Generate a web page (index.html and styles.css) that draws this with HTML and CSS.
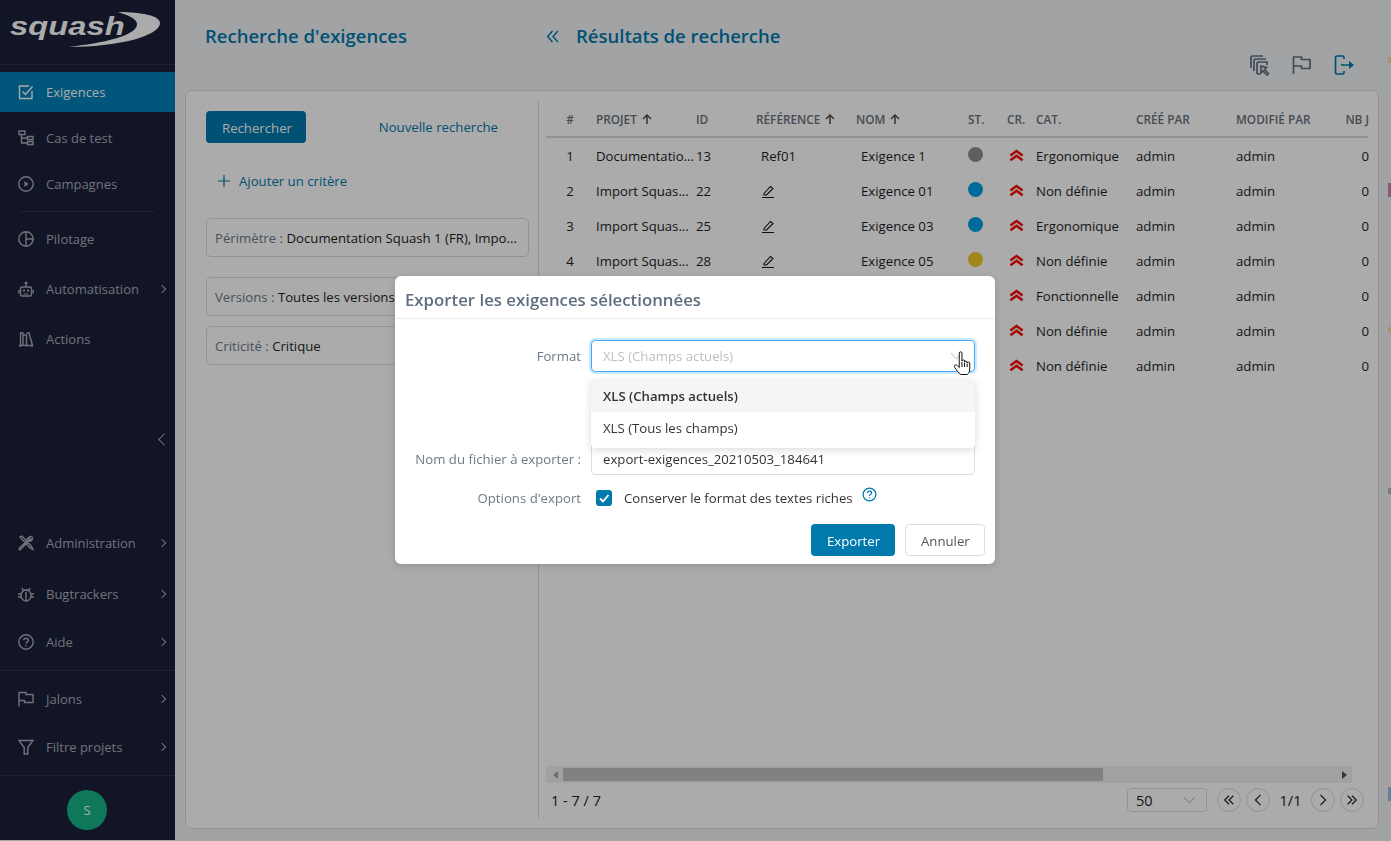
FILE: index.html
```html
<!DOCTYPE html>
<html lang="fr">

<head>
    <meta charset="UTF-8">
    <meta name="viewport" content="width=device-width, initial-scale=1.0">
    <title>Recherche d'exigences - Squash</title>
    <link rel="stylesheet" href="styles.css">
</head>

<body>

    <div class="app">
        <!-- Menu principal -->
        <nav class="sidebar">
            <div class="logo">
                <span class="logo-text">squash</span>
                <svg class="logo-swoosh" viewBox="0 0 92 36" width="92" height="36">
                    <path d="M50 0C75 0 92 4 92 11C92 24 50 35 0 35C35 31 69 24 69 12C69 7 60 3 50 0Z" />
                </svg>
            </div>

            <a class="nav-item active">
                <svg class="nav-icon" viewBox="0 0 16 16"><path d="M14 7v7.500H1.500V2H11" /><path d="M4.500 7.500l3 3L14.500 2.500" /></svg>
                <span>Exigences</span>
            </a>
            <a class="nav-item">
                <svg class="nav-icon" viewBox="0 0 16 16"><path d="M1 1h6v3.500H1zM9.500 6.500h5.500v3H9.500zM9.500 11.500h5.500v3H9.500zM3.500 4.500V13H9.500M3.500 8H9.500" /></svg>
                <span>Cas de test</span>
            </a>
            <a class="nav-item">
                <svg class="nav-icon" viewBox="0 0 16 16"><circle cx="8" cy="8" r="7.200" /><path class="solid" d="M6.500 5l4 3-4 3z" /></svg>
                <span>Campagnes</span>
            </a>
            <div class="nav-sep"></div>

            <div class="nav-group">
                <a class="nav-item">
                    <svg class="nav-icon" viewBox="0 0 16 16"><circle cx="8" cy="8" r="7.200" /><path d="M8 .8v14.400M8 8h7.200" /></svg>
                    <span>Pilotage</span>
                </a>
                <a class="nav-item">
                    <svg class="nav-icon" viewBox="0 0 16 16"><rect x="2.500" y="6" width="11" height="9" rx="1.500" /><path d="M8 6V3M.8 9v3.500M15.200 9v3.500" /><circle cx="8" cy="2" r=".8" /><path class="solid" d="M5 8.500h2v2H5zM9 8.500h2v2H9zM5.500 12.500h5v1h-5z" /></svg>
                    <span>Automatisation</span>
                    <i class="nav-arrow"></i>
                </a>
                <a class="nav-item">
                    <svg class="nav-icon" viewBox="0 0 16 16"><path d="M1 14.500h14M2.500 14.500V2H5v12.500M5 4h3.500v10.500M8.500 2h2.500l3.500 12.500M2 16v-1.500M14 16v-1.500" /></svg>
                    <span>Actions</span>
                </a>
            </div>

            <div class="collapse-row"><i class="collapse-arrow"></i></div>

            <a class="nav-item admin">
                <svg class="nav-icon" viewBox="0 0 16 16"><path d="M2 2l2-1 9.500 10.500 1.500 3-3-1.500zM13 1.500l-2.500 2.500 1.500 1.500 2.500-2.500c0 2-2 4-4 3L3.500 13.500 2 15 1 14l1-1.500L9 6c-.5-2 2-4.500 4-4.500z" /></svg>
                <span>Administration</span>
                <i class="nav-arrow"></i>
            </a>
            <a class="nav-item bug">
                <svg class="nav-icon" viewBox="0 0 16 16"><ellipse cx="8" cy="9.500" rx="5" ry="5.500" /><path d="M8 6v8M5 4.500L4 2M11 4.500L12 2M3 8H0M13 8h3M3 11H0M13 11h3" /><path class="solid" d="M5 3.500h6V5H5z" /></svg>
                <span>Bugtrackers</span>
                <i class="nav-arrow"></i>
            </a>
            <a class="nav-item aide">
                <svg class="nav-icon" viewBox="0 0 16 16"><circle cx="8" cy="8" r="7.200" /><path d="M5.800 6.200C5.800 3.500 10.300 3.500 10.300 6.200 10.300 7.900 8 7.800 8 9.800M8 11v1.200" /></svg>
                <span>Aide</span>
                <i class="nav-arrow"></i>
            </a>
            <div class="nav-line"></div>
            <a class="nav-item jalons">
                <svg class="nav-icon" viewBox="0 0 16 16"><path d="M1 15.500V1.500h7v2h7v8H6.500v-2H1" /></svg>
                <span>Jalons</span>
                <i class="nav-arrow"></i>
            </a>
            <a class="nav-item filtre">
                <svg class="nav-icon" viewBox="0 0 16 16"><path d="M1 1.500h14L9.800 8.500v6.500H6.200V8.500z" /></svg>
                <span>Filtre projets</span>
                <i class="nav-arrow"></i>
            </a>
            <div class="nav-line"></div>
            <div class="avatar">S</div>
        </nav>

        <!-- Contenu -->
        <main class="content">
            <div class="page-head">
                <h1 class="title-left">Recherche d'exigences</h1>
                <div class="head-right">
                    <div class="title-row">
                        <svg class="fold-icon" viewBox="0 0 12 12"><path d="M6 1L1.500 6 6 11M11 1L6.500 6 11 11" /></svg>
                        <h1>Résultats de recherche</h1>
                    </div>
                    <div class="head-tools">
                        <svg class="tool-icon" viewBox="0 0 22 22"><path d="M2 14V3.500C2 2.500 2.500 2 3.500 2H14M5 17V6.500C5 5.500 5.500 5 6.500 5H17M8 20V9.500C8 8.500 8.500 8 9.500 8H18v3M8 20h3M12 12v7l2-2 4 4 1.500-1.500-4-4 2-2z" /></svg>
                        <svg class="tool-icon" viewBox="0 0 22 22"><path d="M2.500 20V3h8v2.500H19v9h-8.500V12H2.500" /></svg>
                        <svg class="tool-icon blue" viewBox="0 0 22 22"><path d="M11 5V3.500C11 2.500 10.500 2 9.500 2H4C3 2 2.500 2.500 2.500 3.500v15c0 1 .5 1.500 1.500 1.500h5.500c1 0 1.500-.5 1.500-1.500V17M8 11h11" /><path class="solid-tool" d="M16 7l5 4-5 4z" /></svg>
                    </div>
                </div>
            </div>

            <section class="card">
                <!-- Critères -->
                <div class="criteria">
                    <div class="criteria-actions">
                        <button class="btn btn-primary">Rechercher</button>
                        <a class="link-new">Nouvelle recherche</a>
                    </div>
                    <a class="add-criteria">
                        <svg viewBox="0 0 12 12" width="12" height="12"><path d="M6 0v12M0 6h12" /></svg>
                        <span>Ajouter un critère</span>
                    </a>
                    <div class="criteria-tag scope"><span class="tag-label">Périmètre :</span> Documentation Squash 1 (FR), Impo...</div>
                    <div class="criteria-tag"><span class="tag-label">Versions :</span> Toutes les versions</div>
                    <div class="criteria-tag"><span class="tag-label">Criticité :</span> Critique</div>
                </div>

                <!-- Résultats -->
                <div class="results">
                    <div class="grid-row grid-head">
                        <div class="center">#</div>
                        <div>PROJET <svg class="sort" viewBox="0 0 10 10"><path d="M5 10V1M1 5l4-4 4 4" /></svg></div>
                        <div>ID</div>
                        <div>RÉFÉRENCE <svg class="sort" viewBox="0 0 10 10"><path d="M5 10V1M1 5l4-4 4 4" /></svg></div>
                        <div>NOM <svg class="sort" viewBox="0 0 10 10"><path d="M5 10V1M1 5l4-4 4 4" /></svg></div>
                        <div class="st">ST.</div>
                        <div>CR.</div>
                        <div>CAT.</div>
                        <div>CRÉÉ PAR</div>
                        <div>MODIFIÉ PAR</div>
                        <div class="right clip">NB J</div>
                    </div>
                    <div id="rows"></div>
                    <div class="grid-spacer"></div>

                    <div class="scrollbar">
                        <i class="scroll-left"></i>
                        <div class="scroll-track"><div class="scroll-thumb"></div></div>
                        <i class="scroll-right"></i>
                    </div>

                    <div class="pager">
                        <span class="pager-count">1 - 7 / 7</span>
                        <div class="pager-size"><span>50</span><svg viewBox="0 0 14 8" width="13" height="8"><path d="M1 1l6 6 6-6" /></svg></div>
                        <button class="page-btn"><svg viewBox="0 0 14 12"><path d="M7 1L2 6l5 5M12 1L7 6l5 5" /></svg></button>
                        <button class="page-btn"><svg viewBox="0 0 14 12"><path d="M10 0L4 6l6 6" /></svg></button>
                        <span class="page-num">1/1</span>
                        <button class="page-btn"><svg viewBox="0 0 14 12"><path d="M4 0l6 6-6 6" /></svg></button>
                        <button class="page-btn"><svg viewBox="0 0 14 12"><path d="M2 1l5 5-5 5M7 1l5 5-5 5" /></svg></button>
                    </div>
                </div>
            </section>
        </main>

        <!-- Bord de la colonne suivante, coupé par la fenêtre -->
        <div class="right-rail">
            <i class="rail-mark m1"></i>
            <i class="rail-mark m2"></i>
            <i class="rail-mark m3"></i>
            <i class="rail-mark m4"></i>
            <i class="rail-mark m5"></i>
        </div>
    </div>

    <!-- Popup d'export -->
    <div class="scrim"></div>
    <div class="dialog">
        <h2 class="dialog-title">Exporter les exigences sélectionnées</h2>
        <div class="dialog-body">
            <div class="form-row">
                <label>Format</label>
                <div class="select-box focus">
                    <span>XLS (Champs actuels)</span>
                    <svg viewBox="0 0 14 8" width="13" height="8"><path d="M1 1l6 6 6-6" /></svg>
                </div>
            </div>
            <div class="form-row file-row">
                <label>Nom du fichier à exporter :</label>
                <div class="select-box">export-exigences_20210503_184641</div>
            </div>
            <div class="form-row option-row">
                <label>Options d'export</label>
                <span class="check">
                    <svg viewBox="0 0 12 12" width="12" height="12"><path d="M2 6.500l3 3 5.500-6.500" /></svg>
                </span>
                <span class="check-label">Conserver le format des textes riches</span>
                <svg class="help" viewBox="0 0 16 16" width="15" height="15"><circle cx="8" cy="8" r="6.800" /><path d="M5.800 6.300C5.800 3.800 10.200 3.800 10.200 6.300 10.200 7.900 8 7.800 8 9.500M8 10.800v1.200" /></svg>
            </div>
            <div class="dialog-actions">
                <button class="btn btn-export">Exporter</button>
                <button class="btn btn-cancel">Annuler</button>
            </div>
        </div>

        <div class="dropdown">
            <div class="option selected">XLS (Champs actuels)</div>
            <div class="option">XLS (Tous les champs)</div>
        </div>

        <svg class="hand" viewBox="-.5 0 19.500 24" width="20" height="24">
            <path d="M5.500 2c0-1.600 2.700-1.600 2.700 0v8c0-1.400 2.600-1.400 2.600 0v1c0-1.300 2.600-1.300 2.600 0v1c0-1.200 2.600-1.200 2.600 0v6c0 3-1.200 4.500-2.500 5.500H7C5 22 3 19.500 1 16.500-.2 14.500 1.800 13 3.500 14.500l2 2z" />
            <path d="M8.200 11v5M10.800 11.500V16M13.400 12.500V16" />
        </svg>
    </div>

    <script>
        // Les lignes 5 à 7 sont cachées par le popup jusqu'à la colonne ST.
        var lignes = [
            ['1', 'Documentatio...', '13', 'Ref01', 'Exigence 1', 'gris', 'Ergonomique'],
            ['2', 'Import Squas...', '22', null, 'Exigence 01', 'bleu', 'Non définie'],
            ['3', 'Import Squas...', '25', null, 'Exigence 03', 'bleu', 'Ergonomique'],
            ['4', 'Import Squas...', '28', null, 'Exigence 05', 'jaune', 'Non définie'],
            ['', '', '', '', '', '', 'Fonctionnelle'],
            ['', '', '', '', '', '', 'Non définie'],
            ['', '', '', '', '', '', 'Non définie']
        ];

        var crayon = '<svg class="pen" viewBox="0 0 14 14" width="14" height="14"><path d="M3 9.500L9.500 2.500 12 4.500 5.500 11H3zM1 13.500h12" /></svg>';
        var chevrons = '<svg class="crit" viewBox="0 0 16 13" width="15" height="13"><path d="M1.500 6.500L8 1.800l6.500 4.700M1.500 11.500L8 6.800l6.500 4.700" /></svg>';

        var html = '';
        lignes.forEach(function (l) {
            html += '<div class="grid-row">'
                + '<div class="center">' + l[0] + '</div>'
                + '<div>' + l[1] + '</div>'
                + '<div>' + l[2] + '</div>'
                + '<div class="indent">' + (l[3] === null ? crayon : l[3]) + '</div>'
                + '<div class="indent">' + l[4] + '</div>'
                + '<div class="st"><span class="dot ' + l[5] + '"></span></div>'
                + '<div class="cr">' + chevrons + '</div>'
                + '<div>' + l[6] + '</div>'
                + '<div>admin</div><div>admin</div>'
                + '<div class="right">0</div>'
                + '</div>';
        });
        document.getElementById('rows').innerHTML = html;
    </script>

</body>

</html>
```

FILE: styles.css
```css
* {
    box-sizing: border-box;
}

body {
    margin: 0;
    height: 841px;
    overflow: hidden;
    font-family: "Open Sans", "Noto Sans", Arial, sans-serif;
    font-size: 13.2px;
    color: #1e1e1e;
    background-color: #f2f4f7;
}

.app {
    display: flex;
    height: 841px;
}

/* Menu principal */
.sidebar {
    width: 175px;
    height: 840px;
    flex-shrink: 0;
    display: flex;
    flex-direction: column;
    background-color: #1a2038;
    color: #a8acb8;
}

.logo {
    position: relative;
    height: 65px;
    margin-bottom: 7px;
    border-bottom: 1px solid #2d3350;
}

.logo-text {
    position: absolute;
    left: 10px;
    top: 11px;
    font-family: "Liberation Sans", Arial, sans-serif;
    font-style: italic;
    font-weight: bold;
    font-size: 25px;
    line-height: 30px;
    color: #fff;
    transform: scaleX(1.31);
    transform-origin: left center;
}

.logo-swoosh {
    position: absolute;
    left: 68px;
    top: 12px;
    fill: #fff;
}

.nav-item {
    display: flex;
    align-items: center;
    height: 40px;
    padding-left: 18px;
    margin-bottom: 6px;
    font-size: 13px;
    cursor: pointer;
}

.nav-item span {
    flex: 1;
    margin-left: 12px;
}

.nav-item.active {
    background-color: #0082b8;
    color: #fff;
}

.nav-icon {
    width: 16px;
    height: 16px;
    fill: none;
    stroke: currentColor;
    stroke-width: 1.400;
    flex-shrink: 0;
}

.nav-icon .solid {
    fill: currentColor;
    stroke: none;
}

.nav-arrow {
    width: 6px;
    height: 6px;
    margin-right: 10px;
    border-top: 1.500px solid currentColor;
    border-right: 1.500px solid currentColor;
    transform: rotate(45deg);
}

.nav-sep {
    height: 1px;
    margin: 1px 20px 7px;
    background-color: #2d3350;
}

.nav-group {
    display: flex;
    flex-direction: column;
    gap: 4px;
}

.collapse-row {
    display: flex;
    justify-content: flex-end;
    height: 20px;
    margin-top: 65px;
    padding: 5px 6px 0 0;
}

.collapse-arrow {
    width: 9px;
    height: 9px;
    border-left: 1.300px solid currentColor;
    border-bottom: 1.300px solid currentColor;
    transform: rotate(45deg);
}

.nav-item.admin {
    margin-top: 73px;
    margin-bottom: 11px;
}

.nav-item.bug {
    margin-bottom: 8px;
}

.nav-item.aide {
    margin-bottom: 8px;
}

.nav-item.jalons {
    margin-top: 8px;
    margin-bottom: 8px;
}

.nav-item.filtre {
    margin-bottom: 8px;
}

.nav-line {
    height: 1px;
    flex-shrink: 0;
    background-color: #2d3350;
}

.avatar {
    width: 40px;
    height: 40px;
    margin: 14px 0 0 67px;
    border-radius: 50%;
    background-color: #18b386;
    color: #fff;
    font-size: 13px;
    line-height: 40px;
    text-align: center;
}

/* Contenu */
.content {
    flex: 1;
    display: flex;
    flex-direction: column;
    min-width: 0;
    padding-left: 10px;
    padding-bottom: 12px;
}

.right-rail {
    width: 12px;
    flex-shrink: 0;
    padding-left: 9px;
}

.rail-mark {
    display: block;
    width: 3px;
}

.m1 {
    height: 6px;
    margin-top: 57px;
    background-color: #f2dcb0;
}

.m2 {
    height: 14px;
    margin-top: 120px;
    background-color: #c48ab0;
}

.m3 {
    height: 6px;
    margin-top: 130px;
    background-color: #f2dcb0;
}

.m4 {
    height: 6px;
    margin-top: 155px;
    background-color: #b4bac0;
}

.m5 {
    height: 14px;
    margin-top: 293px;
    background-color: #8ec4e0;
}

.page-head {
    display: flex;
    height: 90px;
}

.page-head h1 {
    margin: 0;
    font-size: 18.500px;
    font-weight: 600;
    color: #0079ad;
}

.title-left {
    width: 361px;
    padding: 23px 0 0 20px;
}

.head-right {
    flex: 1;
    padding-top: 23px;
}

.title-row {
    display: flex;
    align-items: center;
}

.fold-icon {
    width: 13px;
    height: 13px;
    margin: 2px 17px 0 0;
    fill: none;
    stroke: #0079ad;
    stroke-width: 1.300;
}

.head-tools {
    display: flex;
    justify-content: flex-end;
    gap: 20px;
    padding: 6px 24px 0 0;
}

.tool-icon {
    width: 22px;
    height: 22px;
    fill: none;
    stroke: #5f6f80;
    stroke-width: 1.700;
}

.tool-icon.blue {
    stroke: #0079ad;
}

.tool-icon .solid-tool {
    fill: #0079ad;
    stroke: none;
}

.card {
    flex: 1;
    display: flex;
    min-height: 0;
    padding: 10px 10px 10px 0;
    background-color: #fff;
    border: 1px solid #d5dce3;
    border-radius: 6px;
}

/* Critères */
.criteria {
    width: 353px;
    flex-shrink: 0;
    padding: 10px 9px 0 20px;
    border-right: 1px solid #d5dce3;
}

.criteria-actions {
    display: flex;
    align-items: center;
    justify-content: space-between;
    padding-right: 31px;
}

.btn {
    height: 32px;
    padding: 1px 15px 0;
    border: 1px solid transparent;
    border-radius: 4px;
    font-family: inherit;
    font-size: 13.200px;
    cursor: pointer;
}

.btn-primary {
    width: 100px;
    background-color: #0079ad;
    color: #fff;
}

.link-new {
    color: #0079ad;
}

.add-criteria {
    display: flex;
    align-items: center;
    gap: 9px;
    margin: 29px 0 0 12px;
    color: #0079ad;
}

.add-criteria svg {
    fill: none;
    stroke: #0079ad;
    stroke-width: 1.200;
}

.criteria-tag {
    height: 39px;
    margin-top: 10px;
    padding: 0 8px;
    line-height: 39px;
    white-space: nowrap;
    overflow: hidden;
    border: 1px solid #d5dce3;
    border-radius: 5px;
}

.criteria-tag.scope {
    margin-top: 28px;
    margin-bottom: 20px;
}

.tag-label {
    color: #6b7a88;
}

/* Résultats */
.results {
    flex: 1;
    min-width: 0;
    display: flex;
    flex-direction: column;
    padding: 0 0 6px 7px;
}

.grid-row {
    display: grid;
    grid-template-columns: 50px 100px 60px 100px 112px 39px 29px 100px 100px 100px 33px;
    align-items: center;
    height: 35px;
}

.grid-row > div {
    white-space: nowrap;
}

.grid-head {
    height: 37px;
    font-size: 11.800px;
    font-weight: 600;
    color: #69737d;
    border-bottom: 2px solid #d5dce3;
}

.center {
    text-align: center;
    padding-right: 2px;
}

.right {
    text-align: right;
}

.clip {
    overflow: hidden;
}

.cr {
    padding-left: 2px;
}

.indent {
    padding-left: 5px;
}

.sort {
    width: 10px;
    height: 10px;
    margin-left: 2px;
    fill: none;
    stroke: #555;
    stroke-width: 1.600;
}

.dot {
    display: block;
    width: 15px;
    height: 15px;
    margin-top: -2px;
    border-radius: 50%;
}

.dot.gris {
    background-color: #8e8e8e;
}

.dot.bleu {
    background-color: #00a0e6;
}

.dot.jaune {
    background-color: #f0c828;
}

.pen {
    display: block;
    fill: none;
    stroke: #111;
    stroke-width: 1.100;
}

.crit {
    display: block;
    fill: none;
    stroke: #f80808;
    stroke-width: 2.700;
}

.grid-spacer {
    flex: 1;
}

.scrollbar {
    display: flex;
    align-items: center;
    height: 17px;
    margin-right: 16px;
    background-color: #f1f1f1;
}

.scroll-left {
    width: 0;
    height: 0;
    margin: 0 5px 0 7px;
    border: 4px solid transparent;
    border-left-width: 0;
    border-right: 5px solid #a3a3a3;
}

.scroll-track {
    flex: 1;
    height: 13px;
}

.scroll-thumb {
    width: 540px;
    height: 13px;
    background-color: #c1c1c1;
}

.scroll-right {
    width: 0;
    height: 0;
    margin: 0 5px 0 6px;
    border: 4px solid transparent;
    border-right-width: 0;
    border-left: 5px solid #505050;
}

.pager {
    display: flex;
    align-items: center;
    gap: 5px;
    height: 24px;
    margin-top: 5px;
    margin-right: 4px;
    padding-left: 5px;
    font-size: 14.500px;
}

.pager-count {
    flex: 1;
}

.pager-size {
    display: flex;
    align-items: center;
    justify-content: space-between;
    width: 80px;
    height: 24px;
    margin-right: 5px;
    padding: 0 10px 0 8px;
    border: 1px solid #d5dce3;
    border-radius: 4px;
}

.pager-size svg,
.select-box svg {
    fill: none;
    stroke: #c4c8cc;
    stroke-width: 1.200;
}

.page-btn {
    width: 24px;
    height: 24px;
    padding: 5px;
    background: none;
    border: 1px solid #d5dce3;
    border-radius: 50%;
}

.page-btn svg {
    display: block;
    width: 100%;
    height: 100%;
    fill: none;
    stroke: #222;
    stroke-width: 1.400;
}

.page-num {
    width: 31px;
    text-align: center;
}

/* Popup d'export */
.scrim {
    position: fixed;
    left: 0;
    top: 0;
    width: 100%;
    height: 100%;
    background-color: rgba(0, 0, 0, 0.33);
}

.dialog {
    position: fixed;
    left: 395px;
    top: 276px;
    width: 600px;
    height: 288px;
    background-color: #fff;
    border-radius: 6px;
    box-shadow: 0 2px 10px rgba(0, 0, 0, 0.15);
}

.dialog-title {
    height: 43px;
    margin: 0;
    padding: 0 10px;
    font-size: 16.800px;
    font-weight: 600;
    line-height: 48px;
    color: #5f6f7f;
    border-bottom: 1px solid #eceff2;
}

.dialog-body {
    padding: 21px 20px 0 0;
}

.form-row {
    display: flex;
    align-items: center;
}

.form-row label {
    width: 186px;
    margin-right: 10px;
    text-align: right;
    color: #6b7a88;
}

.select-box {
    display: flex;
    align-items: center;
    justify-content: space-between;
    width: 384px;
    height: 32px;
    padding: 0 11px;
    color: #333;
    border: 1px solid #d9dde1;
    border-radius: 4px;
}

.select-box.focus {
    color: #bfbfbf;
    border-color: #40a9ff;
    box-shadow: 0 0 0 2px rgba(24, 144, 255, 0.2);
}

.file-row {
    margin-top: 71px;
}

.option-row {
    margin-top: 14px;
}

.check {
    display: flex;
    align-items: center;
    justify-content: center;
    width: 16px;
    height: 16px;
    margin-left: 5px;
    background-color: #0079ad;
    border-radius: 3px;
}

.check svg {
    fill: none;
    stroke: #fff;
    stroke-width: 1.800;
}

.check-label {
    margin: 0 9px 0 12px;
    color: #333;
}

.help {
    margin-top: -7px;
    fill: none;
    stroke: #0079ad;
    stroke-width: 1.300;
}

.dialog-actions {
    display: flex;
    justify-content: flex-end;
    gap: 10px;
    margin-top: 17px;
    margin-right: -10px;
}

.btn-export {
    width: 84px;
    background-color: #0079ad;
    color: #fff;
}

.btn-cancel {
    width: 80px;
    background-color: #fff;
    color: #555;
    border-color: #d9dde1;
}

.dropdown {
    position: absolute;
    left: 196px;
    top: 104px;
    width: 384px;
    height: 68px;
    background-color: #fff;
    border-radius: 4px;
    box-shadow: 0 2px 8px rgba(0, 0, 0, 0.15);
}

.option {
    height: 32px;
    padding: 0 12px;
    line-height: 32px;
    color: #333;
}

.option.selected {
    font-weight: 600;
    background-color: #f5f5f7;
}

.hand {
    position: absolute;
    left: 558px;
    top: 75px;
    fill: #fff;
    stroke: #111;
    stroke-width: 1;
}
```
